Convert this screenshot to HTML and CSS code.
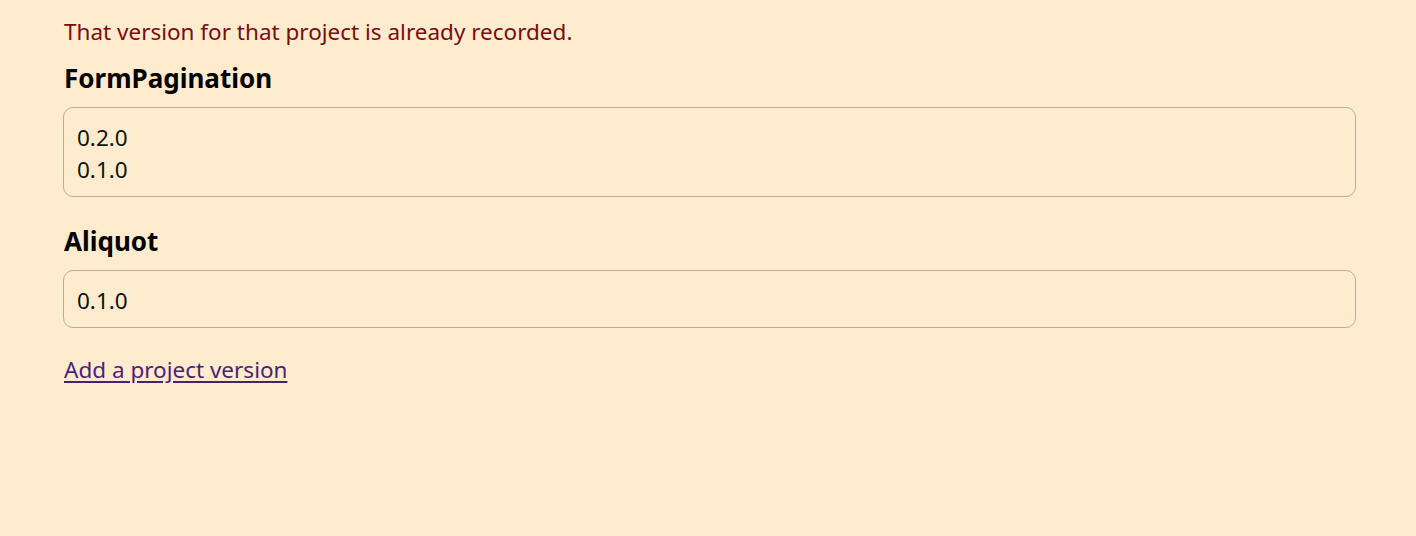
FILE: index.html
```html
<!DOCTYPE html>
<html lang="en">
<head>
<meta charset="utf-8">
<title>Project versions</title>
<link rel="stylesheet" href="styles.css">
</head>
<body>
<main class="page">
  <p class="error">That version for that project is already recorded.</p>
  <section class="project">
    <h2 class="project-name">FormPagination</h2>
    <ul class="versions">
      <li>0.2.0</li>
      <li>0.1.0</li>
    </ul>
  </section>
  <section class="project">
    <h2 class="project-name">Aliquot</h2>
    <ul class="versions">
      <li>0.1.0</li>
    </ul>
  </section>
  <a class="add-link" href="#">Add a project version</a>
</main>
</body>
</html>
```

FILE: styles.css
```css
html, body {
  margin: 0;
  padding: 0;
  background: #ffebcd;
}
body {
  font-family: "Noto Sans", "Open Sans", sans-serif;
  font-size: 22.5px;
  line-height: 32px;
  color: #111;
}
.page {
  display: flex;
  flex-direction: column;
  align-items: flex-start;
  padding: 16px 60px 0 63px;
}
.error {
  margin: 0 0 14px 1px;
  color: #7a0c0c;
}
.project {
  align-self: stretch;
  display: flex;
  flex-direction: column;
  margin-bottom: 28px;
}
.project-name {
  margin: 0 0 13px 1px;
  font-size: 26px;
  font-weight: 700;
  line-height: 32px;
  color: #000;
}
.versions {
  list-style: none;
  margin: 0;
  padding: 14px 13px 10px;
  border: 1px solid #bcab97;
  border-radius: 10px;
}
.add-link {
  margin: -2px 0 0 1px;
  color: #4e1f78;
  text-decoration: underline;
  text-underline-offset: 3px;
}
```
